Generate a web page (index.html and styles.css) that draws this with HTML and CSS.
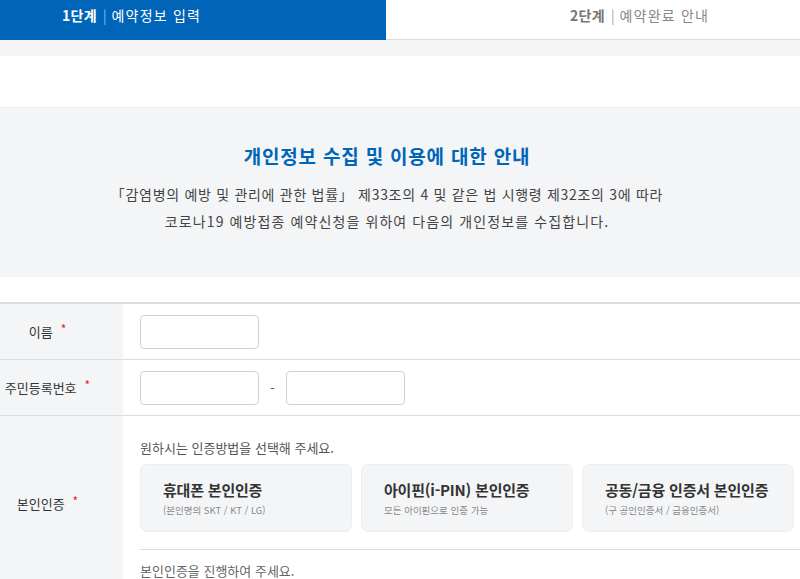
FILE: index.html
```html
<!DOCTYPE html>
<html lang="ko">
<head>
<meta charset="utf-8">
<title>예약정보 입력</title>
<link rel="stylesheet" href="styles.css">
</head>
<body>
<div class="tabs">
  <div class="tab tab-on"><b>1단계</b><span class="bar">|</span><span class="tab-name">예약정보 입력</span></div>
  <div class="tab tab-off"><b>2단계</b><span class="bar">|</span><span class="tab-name">예약완료 안내</span></div>
</div>
<div class="strip"></div>
<div class="space"></div>
<section class="info">
  <h2 class="info-title">개인정보 수집 및 이용에 대한 안내</h2>
  <p class="info-text">「감염병의 예방 및 관리에 관한 법률」 제33조의 4 및 같은 법 시행령 제32조의 3에 따라<br><span class="line-two">코로나19 예방접종 예약신청을 위하여 다음의 개인정보를 수집합니다.</span></p>
</section>
<div class="form">
  <div class="row">
    <div class="label">이름<span class="req">*</span></div>
    <div class="field"><input class="inp" type="text"></div>
  </div>
  <div class="row">
    <div class="label">주민등록번호<span class="req">*</span></div>
    <div class="field"><input class="inp" type="text"><span class="dash">-</span><input class="inp" type="text"></div>
  </div>
  <div class="row row-auth">
    <div class="label">본인인증<span class="req">*</span></div>
    <div class="field field-auth">
      <p class="guide">원하시는 인증방법을 선택해 주세요.</p>
      <div class="cards">
        <div class="card"><div class="card-t">휴대폰 본인인증</div><div class="card-s">(본인명의 SKT / KT / LG)</div></div>
        <div class="card"><div class="card-t">아이핀(i-PIN) 본인인증</div><div class="card-s">모든 아이핀으로 인증 가능</div></div>
        <div class="card"><div class="card-t">공동/금융 인증서 본인인증</div><div class="card-s">(구 공인인증서 / 금융인증서)</div></div>
      </div>
      <p class="status">본인인증을 진행하여 주세요.</p>
    </div>
  </div>
</div>
</body>
</html>
```

FILE: styles.css
```css
* { box-sizing: border-box; }
html, body { margin: 0; padding: 0; }
body {
  width: 800px;
  font-family: "Noto Sans CJK KR", "Noto Sans", sans-serif;
  color: #333;
  background: #fff;
  overflow: hidden;
}
.tabs {
  display: flex;
  height: 40px;
}
.tab {
  height: 40px;
  font-size: 14px;
  line-height: 30px;
  white-space: nowrap;
}
.tab b { font-weight: 700; letter-spacing: 0.3px; }
.tab .bar { margin: 0 5px 0 6px; font-weight: 300; }
.tab-name { letter-spacing: 1.2px; }
.tab-on {
  width: 386px;
  background: #0065b8;
  color: #fff;
  padding-left: 62px;
  border-bottom: 1px solid #0065b8;
}
.tab-on .bar { color: #c9dbef; }
.tab-off {
  flex: 1;
  color: #888;
  padding-left: 184px;
  border-bottom: 1px solid #dcdde2;
}
.tab-off b { color: #777; }
.tab-off .bar { color: #777; }
.strip { height: 16px; background: #f4f5f7; }
.space { height: 51px; }
.info {
  height: 170px;
  background: #f4f5f7;
  border-top: 1px solid #eceef1;
  text-align: center;
  padding: 35px 26px 0 0;
  margin-bottom: 25px;
}
.info-title {
  margin: 0;
  font-size: 19px;
  line-height: 26px;
  color: #0065b8;
  font-weight: 700;
  letter-spacing: 0.8px;
}
.info-text {
  margin: 12px 0 0;
  font-size: 14px;
  line-height: 27px;
  color: #444;
  letter-spacing: 0.7px;
}
.line-two { letter-spacing: 1.1px; }
.form { border-top: 2px solid #dcdde2; }
.row {
  display: flex;
  height: 56px;
  border-bottom: 1px solid #dcdde2;
}
.label {
  width: 123px;
  flex: none;
  background: #f4f5f7;
  display: flex;
  align-items: center;
  justify-content: center;
  padding-right: 28px;
  font-size: 13px;
  color: #333;
  white-space: nowrap;
}
.req {
  color: #e8202a;
  font-size: 12px;
  margin-left: 8px;
  position: relative;
  top: -3px;
}
.field {
  flex: 1;
  display: flex;
  align-items: center;
  padding-left: 17px;
}
.inp {
  width: 119px;
  height: 34px;
  border: 1px solid #cfd1d6;
  border-radius: 4px;
  background: #fff;
  margin: 0;
}
.dash {
  width: 27px;
  text-align: center;
  font-size: 13px;
  color: #555;
}
.row-auth { height: auto; }
.field-auth {
  display: block;
  padding-top: 22px;
  padding-bottom: 9px;
}
.guide {
  margin: 0;
  font-size: 13px;
  line-height: 20px;
  color: #555;
}
.cards {
  display: flex;
  gap: 9px;
  margin-top: 6px;
  padding-bottom: 17px;
  border-bottom: 1px solid #dcdde2;
}
.card {
  width: 212px;
  height: 68px;
  flex: none;
  background: #f4f5f7;
  border: 1px solid #eceef1;
  border-radius: 7px;
  padding: 14px 0 0 22px;
}
.card-t {
  font-size: 15px;
  line-height: 22px;
  font-weight: 700;
  color: #333;
  white-space: nowrap;
  letter-spacing: -0.2px;
}
.card-s {
  font-size: 9.5px;
  line-height: 14px;
  color: #888;
  white-space: nowrap;
  margin-top: 2px;
}
.status {
  margin: 11px 0 0;
  font-size: 13px;
  line-height: 20px;
  color: #666;
}
```
